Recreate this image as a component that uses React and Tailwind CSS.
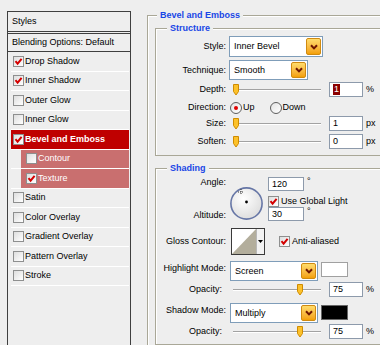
import React from "react";

const styles = [
  { label: "Drop Shadow", on: true },
  { label: "Inner Shadow", on: true },
  { label: "Outer Glow" },
  { label: "Inner Glow" },
  { label: "Bevel and Emboss", on: true, active: true },
  { label: "Contour", sub: true },
  { label: "Texture", on: true, sub: true },
  { label: "Satin" },
  { label: "Color Overlay" },
  { label: "Gradient Overlay" },
  { label: "Pattern Overlay" },
  { label: "Stroke" },
];

const Check = ({ on }) => (
  <span className="flex h-[11px] w-[11px] shrink-0 items-center justify-center border border-[#8e8f8f] bg-gradient-to-br from-[#dedede] to-white">
    {on && (
      <svg width="9" height="9" viewBox="0 0 9 9">
        <path d="M1.5 4.2 L3.6 6.6 L7.6 1.8" fill="none" stroke="#d40000" strokeWidth="2" />
      </svg>
    )}
  </span>
);

const Radio = ({ on }) => (
  <span className="flex h-[12px] w-[12px] shrink-0 items-center justify-center rounded-full border border-[#5e5e5e] bg-gradient-to-br from-[#e4e4e4] to-white">
    {on && <span className="h-[4px] w-[4px] rounded-full bg-[#e00000]" />}
  </span>
);

const Legend = ({ children, className = "" }) => (
  <div className={`-mt-[7px] w-fit bg-[#eeeeee] px-[3px] text-[9px] leading-[13px] font-bold text-[#1846e6] ${className}`}>
    {children}
  </div>
);

const DropButton = () => (
  <span className="my-[1px] mr-[1px] flex w-[15px] shrink-0 items-center justify-center self-stretch rounded-[2px] border border-[#d08a10] bg-gradient-to-b from-[#ffdc6a] to-[#f3a000]">
    <svg width="8" height="6" viewBox="0 0 8 6">
      <path d="M1 1.2 L4 4.4 L7 1.2" fill="none" stroke="#6e1600" strokeWidth="2" />
    </svg>
  </span>
);

const Select = ({ value, className }) => (
  <div className={`flex items-center border border-[#7f9db9] bg-white ${className}`}>
    <span className="flex-1 pl-[4px]">{value}</span>
    <DropButton />
  </div>
);

const Field = ({ children, className = "h-[15px] w-[34px]" }) => (
  <div className={`flex items-center border border-[#8d9aab] bg-white pl-[3px] ${className}`}>{children}</div>
);

const Slider = ({ pos }) => (
  <div className="relative ml-[7px] h-[12px] w-[88px] shrink-0">
    <div className="mt-[5px] h-[2px] border-t border-b border-t-[#a2a2a2] border-b-white" />
    <svg className="absolute top-0" style={{ left: pos }} width="6" height="12" viewBox="0 0 6 12">
      <path d="M0.5 0.5 H5.5 V7.5 L3 11 L0.5 7.5 Z" fill="#fcc12a" stroke="#cf8b00" />
    </svg>
  </div>
);

const Label = ({ children, className = "" }) => (
  <span className={`w-[70px] shrink-0 text-right ${className}`}>{children}</span>
);

const SliderRow = ({ label, pos, value, unit, className = "", labelClass = "" }) => (
  <div className={`flex h-[15px] items-center ${className}`}>
    <Label className={labelClass}>{label}</Label>
    <Slider pos={pos} />
    <Field className="ml-[8px] h-[15px] w-[34px]">{value}</Field>
    <span className="ml-[3px]">{unit}</span>
  </div>
);

export default function App() {
  return (
    <div className="flex h-[345px] w-[380px] overflow-hidden bg-[#eeeeee] font-['Liberation_Sans',Arial,sans-serif] text-[9px] leading-[11px] text-black">
      {/* Styles list */}
      <div className="ml-[7px] mt-[11px] h-[340px] w-[124px] shrink-0 border border-b-0 border-[#3f3f3f]">
        <div className="flex h-[20px] items-center border-b border-[#3f3f3f] pl-[4px]">Styles</div>
        <div className="mt-[1px] flex h-[19px] items-center border-y border-[#3f3f3f] pl-[4px]">
          Blending Options: Default
        </div>
        <div className="pl-[3px] pr-[1px]">
          {styles.map((s) => (
            <div key={s.label} className="flex h-[19.5px] border-b border-white">
              {s.sub && <div className="w-[10px] shrink-0" />}
              <div
                className={`flex flex-1 items-center gap-[1px] ${
                  s.active
                    ? "bg-[#bf0000] pl-[2px] font-bold text-white"
                    : s.sub
                    ? "bg-[#c96f6f] pl-[5px] text-white"
                    : "pl-[2px]"
                }`}
              >
                <Check on={s.on} />
                <span>{s.label}</span>
              </div>
            </div>
          ))}
        </div>
      </div>

      {/* Bevel and Emboss settings */}
      <div className="ml-[16px] mt-[15px] h-[340px] w-[250px] shrink-0 border-l border-t border-[#a9a797] shadow-[inset_1px_1px_0_#ffffff]">
        <Legend className="ml-[9px]">Bevel and Emboss</Legend>

        {/* Structure */}
        <div className="ml-[7px] mt-[6px] w-[240px] border border-[#a9a797] pb-[6px] shadow-[inset_1px_1px_0_#ffffff]">
          <Legend className="ml-[11px]">Structure</Legend>
          <div className="mt-[1px] flex h-[21px] items-center">
            <Label>Style:</Label>
            <Select value="Inner Bevel" className="ml-[3px] h-[21px] w-[94px]" />
          </div>
          <div className="mt-[3px] flex h-[20px] items-center">
            <Label>Technique:</Label>
            <Select value="Smooth" className="ml-[3px] h-[20px] w-[79px]" />
          </div>
          <SliderRow
            className="mt-[2px]"
            label="Depth:"
            pos={0}
            value={<span className="bg-[#8b0000] px-[1px] text-white">1</span>}
            unit="%"
          />
          <div className="mt-[3px] flex h-[15px] items-center">
            <Label>Direction:</Label>
            <span className="ml-[4px]"><Radio on /></span>
            <span className="ml-[1px]">Up</span>
            <span className="ml-[15px]"><Radio /></span>
            <span className="ml-[1px]">Down</span>
          </div>
          <SliderRow className="mt-[1px]" label="Size:" pos={0} value="1" unit="px" />
          <SliderRow className="mt-[3px]" label="Soften:" pos={0} value="0" unit="px" />
        </div>

        {/* Shading */}
        <div className="ml-[7px] mt-[12px] w-[240px] border border-[#a9a797] pb-[5px] shadow-[inset_1px_1px_0_#ffffff]">
          <Legend className="ml-[11px]">Shading</Legend>
          <div className="mt-[2px] flex h-[45px]">
            <div className="flex w-[70px] shrink-0 flex-col justify-between text-right">
              <span>Angle:</span>
              <span className="mb-[1px]">Altitude:</span>
            </div>
            <svg className="ml-[4px] mt-[10px] shrink-0" width="33" height="33" viewBox="0 0 33 33">
              <defs>
                <radialGradient id="dial" cx="40%" cy="35%" r="70%">
                  <stop offset="0" stopColor="#ffffff" />
                  <stop offset="1" stopColor="#dcdcdc" />
                </radialGradient>
              </defs>
              <circle cx="16.5" cy="16.5" r="15.6" fill="url(#dial)" stroke="#6676a6" strokeWidth="1.6" />
              <circle cx="16.5" cy="15" r="1.4" fill="#000" />
              <path d="M11 2 V8 M8 5 H14" stroke="#333" strokeWidth="1" strokeDasharray="1 1" />
            </svg>
            <div className="ml-[5px] flex flex-col">
              <div className="flex">
                <Field className="h-[14px] w-[36px]">120</Field>
                <span className="ml-[3px] leading-[9px]">°</span>
              </div>
              <div className="mt-[5px] flex h-[11px] items-center gap-[2px]">
                <Check on />
                <span>Use Global Light</span>
              </div>
              <div className="flex">
                <Field className="h-[14px] w-[36px]">30</Field>
                <span className="ml-[3px] leading-[9px]">°</span>
              </div>
            </div>
          </div>

          <div className="mt-[6px] flex items-center">
            <Label>Gloss Contour:</Label>
            <div className="ml-[5px] flex h-[27px] w-[34px] shrink-0 border border-[#3a3a3a] bg-white">
              <svg width="24" height="25" viewBox="0 0 24 25">
                <path d="M0 25 L24 0 L24 25 Z" fill="#b3ae9c" />
              </svg>
              <div className="flex flex-1 items-center justify-center border-l border-[#b8b8b8] bg-[#f2f2f2]">
                <svg width="5" height="3" viewBox="0 0 5 3">
                  <path d="M0 0 H5 L2.5 3 Z" fill="#000" />
                </svg>
              </div>
            </div>
            <span className="ml-[14px]"><Check on /></span>
            <span className="ml-[2px]">Anti-aliased</span>
          </div>

          <div className="mt-[6px] flex h-[20px]">
            <Label className="mt-[2px]">Highlight Mode:</Label>
            <Select value="Screen" className="ml-[4px] h-[20px] w-[88px]" />
            <span className="ml-[3px] mt-[1px] h-[15px] w-[27px] border border-[#a0a0a0] bg-white" />
          </div>
          <SliderRow className="mt-[1px]" labelClass="pr-[4px]" label="Opacity:" pos={64} value="75" unit="%" />

          <div className="mt-[6px] flex h-[20px]">
            <Label className="mt-[2px]">Shadow Mode:</Label>
            <Select value="Multiply" className="ml-[4px] h-[20px] w-[88px]" />
            <span className="ml-[3px] mt-[2px] h-[15px] w-[27px] border border-[#666666] bg-black" />
          </div>
          <SliderRow className="mt-[1px]" labelClass="pr-[4px]" label="Opacity:" pos={64} value="75" unit="%" />
        </div>
      </div>
    </div>
  );
}
